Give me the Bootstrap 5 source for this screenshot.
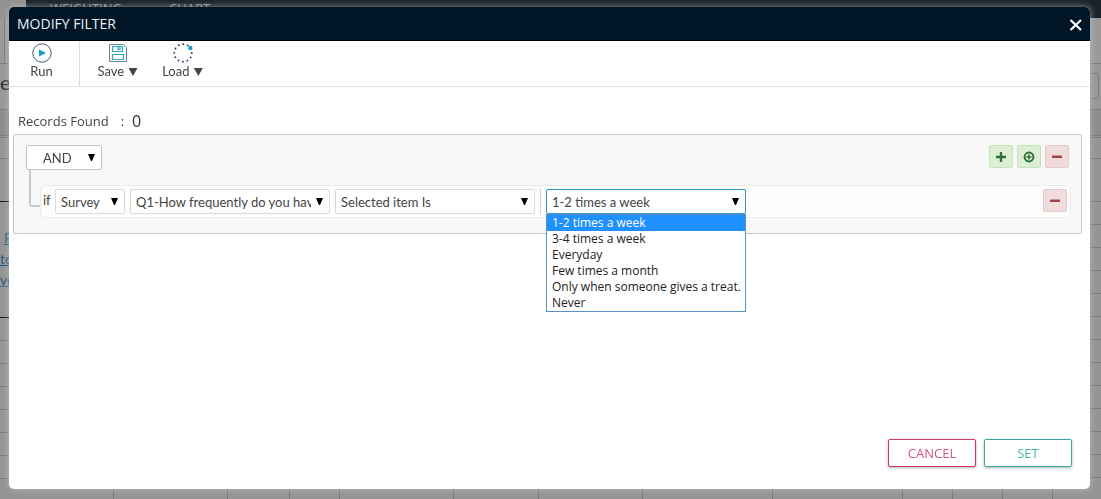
<!DOCTYPE html>
<html lang="en">
<head>
<meta charset="utf-8">
<meta name="viewport" content="width=device-width, initial-scale=1">
<title>Modify Filter</title>
<link href="https://cdn.jsdelivr.net/npm/bootstrap@5.3.0/dist/css/bootstrap.min.css" rel="stylesheet">
<style>
body{font-family:"Lato","Open Sans",sans-serif;font-size:13px;line-height:16px;color:#444;background:#949494}
/* page under the dialog */
.under-page{z-index:0;background:#949494;color:#2b2f33}
.top-nav{height:18px;background:#18222b;color:#8c9297;font-family:"Open Sans",sans-serif;line-height:16px}
.top-logo{width:26px;background:#929292;color:#2d5a7a}
.top-item{margin-left:24px;width:95px}
.side-strip{width:26px}
.strip-row{height:23px;flex:none;border-bottom:1px solid #7a7a7a}
.strip-tools{height:46px;background:#9a9a9a}
.strip-divider{width:5px;border-right:1px solid #7a7a7a}
.strip-title{height:46px;background:#979797;font-size:20px;line-height:36px}
.strip-head{height:26px;background:#8c8c8c}
.strip-thin{height:2px}
.strip-first{height:21px}
.strip-dark{height:43px}
.strip-dark,.strip-links{border-color:#111}
.strip-plain{height:43px}
.strip-links{height:116px;font-size:14px;line-height:21px;padding-top:25px}
.strip-links a{color:#1d5478;display:block;white-space:nowrap}
.strip-button{width:14px;height:26px;border:1px solid #7c7c7c;border-left:0;border-radius:0 4px 4px 0;margin:9px 0 0 10px}
.grid-foot{height:12px}
.grid-foot div{border-right:1px solid #777;flex:none}
.w-a{width:50px}.w-b{width:114px}.w-c{width:130px}.w-d{width:62px}.w-e{width:85px}.w-f{width:104px}
/* dialog */
.filter-wrap{z-index:1;min-height:100vh;padding:7px 11px 10px 9px}
.filter-dialog{background:#fff;border-radius:5px;box-shadow:0 0 7px rgba(205,210,210,.65)}
.dialog-bar{height:34px;background:#001627;border-bottom:1px solid #000;border-radius:5px 5px 0 0;padding:0 7px 0 8px}
.dialog-bar h1{font:14px/20px "Open Sans",sans-serif;color:#eef1f3}
.close-x{width:14px;height:14px}
.tool-row{height:46px;border-bottom:1px solid #e3e3e3}
.tool{border:0;background:none;padding:2px 0 0;color:#444;width:65px;display:flex;flex-direction:column;align-items:center;justify-content:flex-start}
.tool-run{width:71px;border-right:1px solid #ddd;padding-right:5px}
.tool-save{margin-left:5px}
.caret-mark{width:9px;height:8px;margin-left:1px;background:#444;clip-path:polygon(0 0,100% 0,50% 100%);display:inline-block}
.records{font:13px/20px "Open Sans",sans-serif;padding:24px 9px 3px;color:#444}
.records output{font-size:16px;color:#333}
.rule-panel{background:#f8f8f8;border:1px solid #c6c6c6;border-radius:2px;margin:0 8px 0 4px;padding:10px 10px 15px 12px}
.pick{appearance:none;height:25px;border:1px solid #d9d9d9;border-radius:2px;font-size:13px;line-height:16px;color:#444;padding:0 18px 0 5px;
background:#fff url("data:image/svg+xml,%3Csvg xmlns='http://www.w3.org/2000/svg' width='7' height='7'%3E%3Cpath d='M0 0h7L4 7H3z'/%3E%3C/svg%3E") no-repeat right 6px top 8px}
.pick-and{width:76px;padding-left:16px;border-color:#c4c4c4}
.pick-survey{width:70px}
.pick-wide{width:200px}
.pick-open{border-color:#2c96c4;outline:0}
.branch{width:11px;height:37px;border:solid #c9c9c9;border-width:0 0 2px 2px;border-radius:0 0 0 3px;margin:0 0 0 3px}
.rule-line{height:33px;background:#fdfdfd;border:1px solid #ececec;border-radius:4px;padding:3px 3px 3px 2px;margin-top:15px}
.rule-if{width:12px;padding-top:3px}
.rule-fields{gap:5px}
.rule-sep{width:1px;height:25px;background:#d5d5d5}
.group-actions{padding-right:2px}
.sq{width:24px;height:23px;border-radius:2px;border:1px solid;padding:0}
.sq-add{background:#dcefd5;border-color:#c9e2be;color:#33703a}
.sq-del{background:#f0dcdc;border-color:#e6caca;color:#a14448}
.choices{top:100%;left:0;right:0;z-index:5;background:#fff;border:1px solid #5b8fc4;font:12px/16px "Open Sans",sans-serif;color:#222}
.choices li{padding-left:5px;white-space:nowrap}
.choices .is-on{background:#1e90ff;color:#fff}
.dialog-end{padding:0 18px 22px}
.end-btn{width:88px;height:28px;border:1px solid;border-radius:2px;background:#fff;font:13px/16px "Open Sans",sans-serif;box-shadow:0 1px 3px rgba(0,0,0,.3)}
.end-cancel{color:#d9537c;border-color:#cf3864}
.end-set{color:#45b7a9;border-color:#35aa9c}
</style>
</head>
<body>
<div class="under-page position-fixed top-0 start-0 w-100 h-100 overflow-hidden d-flex flex-column" aria-hidden="true">
  <div class="top-nav d-flex flex-shrink-0">
    <div class="top-logo flex-shrink-0"></div>
    <div class="top-item">WEIGHTING</div>
    <div class="top-item">CHART</div>
  </div>
  <div class="d-flex justify-content-between flex-grow-1 overflow-hidden">
    <div class="side-strip overflow-hidden d-flex flex-column">
      <div class="strip-row strip-tools"><div class="strip-divider h-100"></div></div>
      <div class="strip-row strip-title">e</div>
      <div class="strip-row strip-head"></div>
      <div class="strip-row strip-thin"></div>
      <div class="strip-row strip-first"></div>
      <div class="strip-row strip-dark"></div>
      <div class="strip-row strip-links"><a href="#" class="ps-1" tabindex="-1">P</a><a href="#" tabindex="-1">to</a><a href="#" tabindex="-1">yo</a></div>
      <div class="strip-row"></div><div class="strip-row"></div><div class="strip-row"></div><div class="strip-row"></div><div class="strip-row"></div><div class="strip-row"></div><div class="strip-row"></div>
    </div>
    <div class="side-strip overflow-hidden d-flex flex-column">
      <div class="strip-row strip-tools"></div>
      <div class="strip-row strip-title"><div class="strip-button"></div></div>
      <div class="strip-row strip-head"></div>
      <div class="strip-row strip-thin"></div>
      <div class="strip-row strip-first"></div>
      <div class="strip-row strip-plain"></div>
      <div class="strip-row"></div><div class="strip-row"></div><div class="strip-row"></div><div class="strip-row"></div><div class="strip-row"></div><div class="strip-row"></div><div class="strip-row"></div><div class="strip-row"></div><div class="strip-row"></div><div class="strip-row"></div><div class="strip-row"></div><div class="strip-row"></div>
    </div>
  </div>
  <div class="grid-foot d-flex flex-shrink-0">
    <div class="w-b"></div><div class="w-b"></div><div class="w-d"></div><div class="w-a"></div><div class="w-b"></div><div class="w-e"></div><div class="w-f"></div><div class="w-c"></div><div class="w-c"></div><div class="w-a"></div><div class="w-a"></div><div class="w-a"></div>
  </div>
</div>

<div class="filter-wrap position-relative d-flex flex-column">
  <div class="filter-dialog flex-grow-1 d-flex flex-column" role="dialog" aria-labelledby="dlg-title">
    <header class="dialog-bar d-flex align-items-center justify-content-between">
      <h1 id="dlg-title" class="m-0">MODIFY FILTER</h1>
      <button type="button" class="border-0 bg-transparent p-0 d-flex" aria-label="Close">
        <svg class="close-x" viewBox="0 0 14 14" stroke="#fff" stroke-width="2.200"><path d="M1.500 3l10.500 10M12 3l-10.500 10"/></svg>
      </button>
    </header>
    <div class="tool-row d-flex">
      <button type="button" class="tool tool-run"><svg width="20" height="20" viewBox="0 0 20 20"><circle cx="10" cy="10" r="9.200" fill="none" stroke="#44566a"/><path d="M7 6.500l7 3.500-7 3.500z" fill="#14a0c4"/></svg><span>Run</span></button>
      <button type="button" class="tool tool-save"><svg width="20" height="20" viewBox="0 0 20 20" fill="none"><path d="M1.500 1.500h14l3 3v14h-17z" stroke="#6e8296"/><path d="M4.500 3.500h10v5h-10zM10 3.500v3h2v-3M4.500 11.500h11v5h-11z" stroke="#2ba6cb" stroke-width="1.200"/></svg><span>Save <span class="caret-mark"></span></span></button>
      <button type="button" class="tool"><svg width="20" height="20" viewBox="0 0 20 20"><circle cx="10" cy="10" r="8.800" fill="none" stroke="#2b3a55" stroke-width="1.900" stroke-linecap="round" stroke-dasharray="0 4.608"/><circle cx="17.300" cy="4.900" r="2.200" fill="#14a0c4"/></svg><span>Load <span class="caret-mark"></span></span></button>
    </div>
    <div class="records d-flex align-items-center"><span>Records Found</span><span class="mx-2 ps-1">:</span><output>0</output></div>
    <section class="rule-panel">
      <div class="d-flex justify-content-between align-items-start">
        <select class="pick pick-and" aria-label="Group operator"><option>AND</option><option>OR</option></select>
        <div class="group-actions d-flex gap-1">
          <button type="button" class="sq sq-add d-flex align-items-center justify-content-center" aria-label="Add rule"><svg width="10" height="10" viewBox="0 0 10 10" stroke="currentColor" stroke-width="2.400"><path d="M0 5h10M5 0v10"/></svg></button>
          <button type="button" class="sq sq-add d-flex align-items-center justify-content-center" aria-label="Add group"><svg width="12" height="12" viewBox="0 0 12 12" stroke="currentColor" stroke-width="2" fill="none"><circle cx="6" cy="6" r="4.400"/><path d="M3.500 6h5M6 3.500v5" stroke-width="1.600"/></svg></button>
          <button type="button" class="sq sq-del d-flex align-items-center justify-content-center" aria-label="Remove group"><svg width="10" height="4" viewBox="0 0 10 4" fill="currentColor"><rect y=".5" width="10" height="2.600" rx=".5"/></svg></button>
        </div>
      </div>
      <div class="d-flex align-items-start">
        <div class="branch flex-shrink-0"></div>
        <div class="rule-line d-flex flex-grow-1 align-items-start justify-content-between">
          <div class="d-flex">
            <span class="rule-if">if</span>
            <div class="rule-fields d-flex">
              <select class="pick pick-survey" aria-label="Source"><option>Survey</option></select>
              <select class="pick pick-wide" aria-label="Question"><option>Q1-How frequently do you have coffee</option></select>
              <select class="pick pick-wide" aria-label="Condition"><option>Selected item Is</option></select>
              <span class="rule-sep"></span>
              <div class="position-relative">
                <select class="pick pick-wide pick-open" aria-label="Value"><option>1-2 times a week</option></select>
                <ul class="choices list-unstyled m-0 position-absolute" role="listbox">
                  <li class="is-on" role="option" aria-selected="true">1-2 times a week</li>
                  <li role="option">3-4 times a week</li>
                  <li role="option">Everyday</li>
                  <li role="option">Few times a month</li>
                  <li role="option">Only when someone gives a treat.</li>
                  <li role="option">Never</li>
                </ul>
              </div>
            </div>
          </div>
          <button type="button" class="sq sq-del d-flex align-items-center justify-content-center" aria-label="Remove rule"><svg width="10" height="4" viewBox="0 0 10 4" fill="currentColor"><rect y=".5" width="10" height="2.600" rx=".5"/></svg></button>
        </div>
      </div>
    </section>
    <footer class="dialog-end mt-auto d-flex justify-content-end gap-2">
      <button type="button" class="end-btn end-cancel">CANCEL</button>
      <button type="button" class="end-btn end-set">SET</button>
    </footer>
  </div>
</div>
<script src="https://cdn.jsdelivr.net/npm/bootstrap@5.3.0/dist/js/bootstrap.bundle.min.js"></script>
</body>
</html>
